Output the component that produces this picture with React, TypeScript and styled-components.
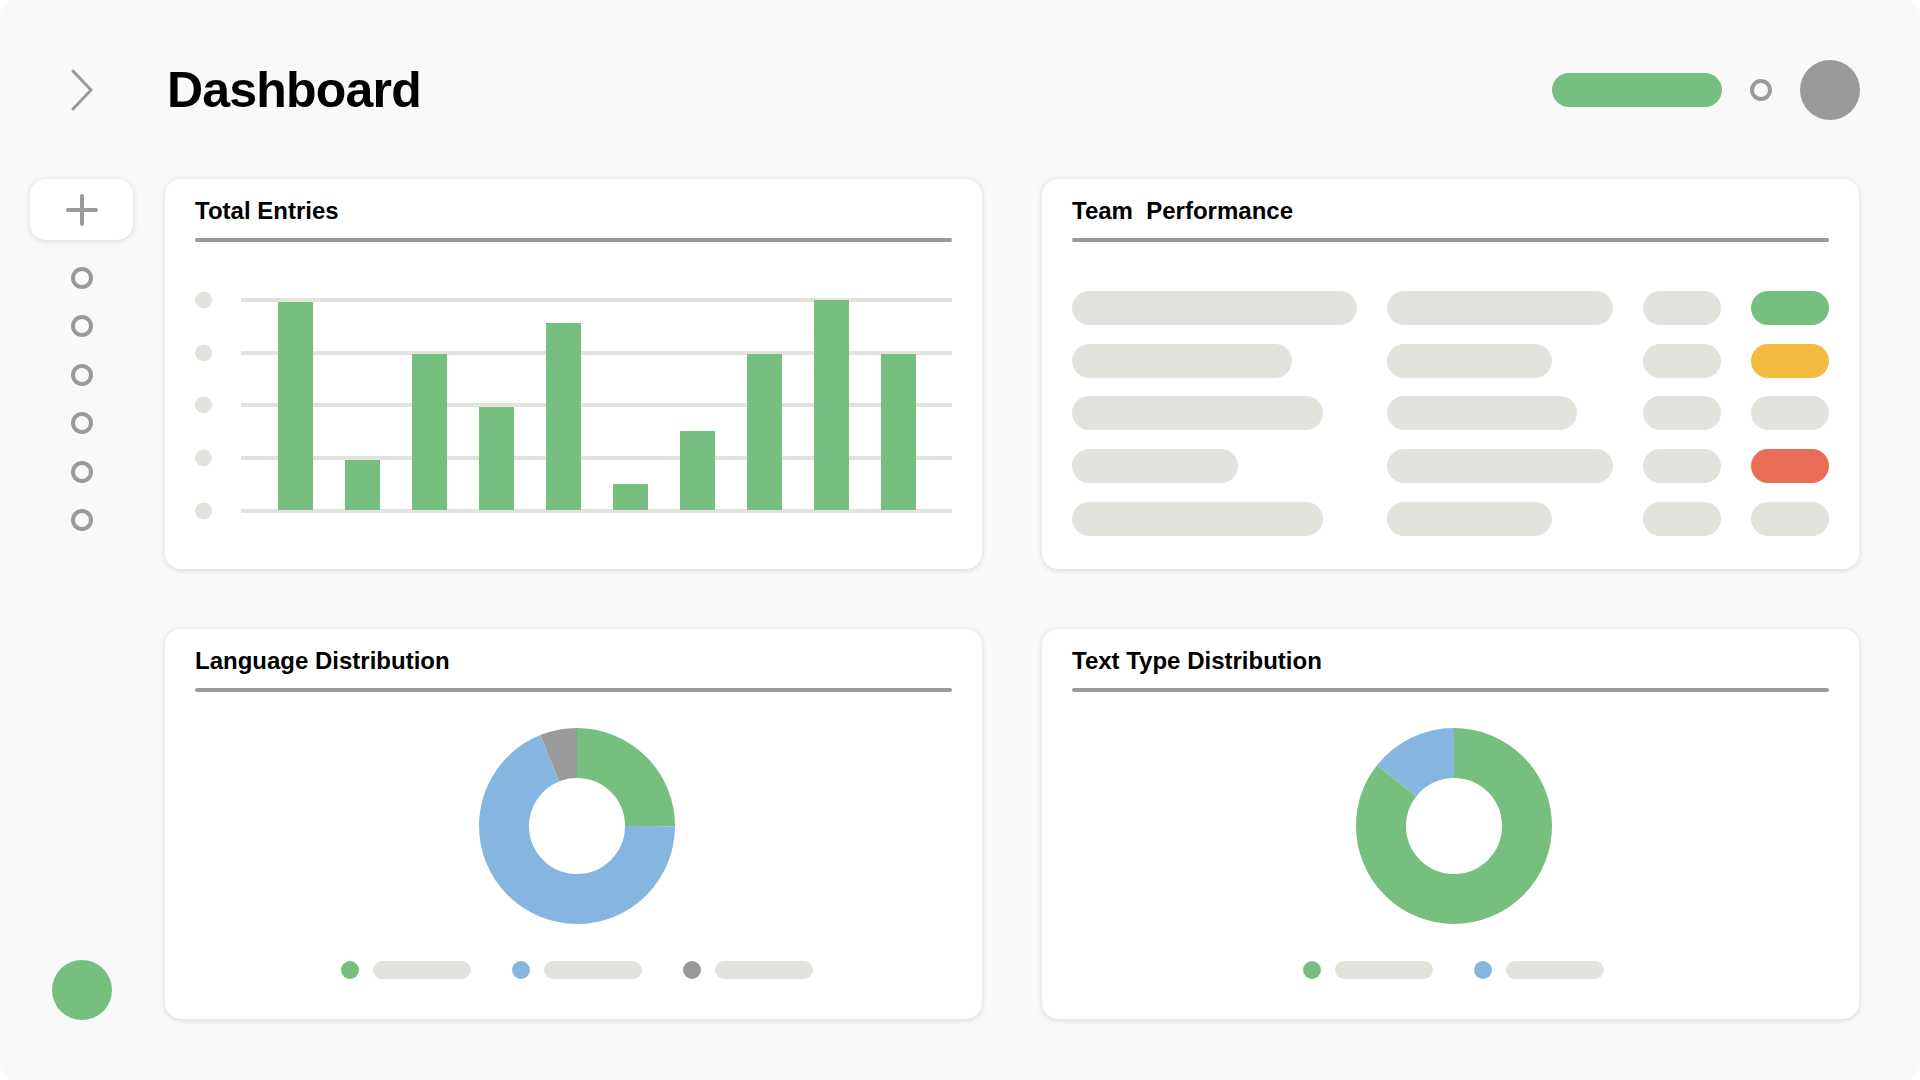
import React from 'react';
import styled, { createGlobalStyle } from 'styled-components';

const colors = {
  page: '#f9f9f9',
  green: '#77bf7f',
  blue: '#86b6df',
  gray: '#9a9a9a',
  yellow: '#f3bb40',
  red: '#e96d57',
  skeleton: '#e3e3dd',
};

type Tone = 'green' | 'yellow' | 'red' | 'gray';

const toneColor: Record<Tone, string> = {
  green: colors.green,
  yellow: colors.yellow,
  red: colors.red,
  gray: colors.skeleton,
};

const GlobalStyle = createGlobalStyle`
  html, body {
    margin: 0;
    padding: 0;
    background: #ffffff;
  }

  body {
    font-family: "Liberation Sans", Arial, sans-serif;
    color: #000;
  }

  * {
    box-sizing: border-box;
  }
`;

const Page = styled.div`
  width: 1920px;
  height: 1080px;
  background: ${colors.page};
  border-radius: 16px;
  overflow: hidden;
  display: grid;
  grid-template-columns: 165px 1fr;
  grid-template-rows: 179px 1fr;
`;

const SideCell = styled.div`
  display: flex;
  align-items: center;
  justify-content: center;
  padding: 0 32px 0 30px;
`;

const Header = styled.header`
  display: flex;
  align-items: center;
  padding-right: 60px;
`;

const Title = styled.h1`
  margin: 0 0 0 2px;
  font-size: 50px;
  line-height: 50px;
  font-weight: 700;
  letter-spacing: -0.8px;
`;

const Actions = styled.div`
  margin-left: auto;
  display: flex;
  align-items: center;
  gap: 28px;
`;

const ActionPill = styled.div`
  width: 170px;
  height: 34px;
  border-radius: 17px;
  background: ${colors.green};
`;

const Ring = styled.div`
  width: 22px;
  height: 22px;
  border-radius: 50%;
  border: 4px solid ${colors.gray};
`;

const Avatar = styled.div`
  width: 60px;
  height: 60px;
  border-radius: 50%;
  background: ${colors.gray};
`;

const Sidebar = styled.nav`
  display: flex;
  flex-direction: column;
  align-items: center;
  padding: 0 32px 60px 30px;
`;

const AddButton = styled.button`
  width: 103px;
  height: 61px;
  border: none;
  border-radius: 16px;
  background: #fff;
  box-shadow: 0 1px 6px rgba(0, 0, 0, 0.14);
  display: flex;
  align-items: center;
  justify-content: center;
  padding: 0;
  cursor: pointer;
`;

const NavList = styled.div`
  margin-top: 27px;
  display: flex;
  flex-direction: column;
  gap: 26.4px;
`;

const StatusDot = styled.div`
  margin-top: auto;
  width: 60px;
  height: 60px;
  border-radius: 50%;
  background: ${colors.green};
`;

const Cards = styled.main`
  display: grid;
  grid-template-columns: 1fr 1fr;
  grid-template-rows: 390px 390px;
  gap: 60px;
  padding-right: 61px;
  align-content: start;
`;

const Card = styled.section`
  background: #fff;
  border-radius: 16px;
  box-shadow: 0 1px 6px rgba(0, 0, 0, 0.14);
  padding: 18px 30px 0;
  display: flex;
  flex-direction: column;
`;

const CardTitle = styled.h2`
  margin: 0;
  font-size: 24px;
  line-height: 28px;
  font-weight: 700;
  white-space: pre;
`;

const Divider = styled.div`
  margin-top: 13px;
  height: 4px;
  border-radius: 2px;
  background: ${colors.gray};
`;

const ChartSvg = styled.svg`
  display: block;
  margin-top: 48px;
`;

const PerfGrid = styled.div`
  margin-top: 49px;
  display: grid;
  grid-template-columns: 285px 226px 78px 78px;
  column-gap: 30px;
  row-gap: 18.67px;
`;

const Pill = styled.div<{ $w?: number; $tone?: Tone }>`
  width: ${(p) => (p.$w ? `${p.$w}px` : '100%')};
  height: 34px;
  border-radius: 17px;
  background: ${(p) => toneColor[p.$tone || 'gray']};
`;

const PieBody = styled.div`
  margin-top: 36px;
  padding-left: 6px;
  display: flex;
  flex-direction: column;
  align-items: center;
`;

const Legend = styled.div`
  margin-top: 37px;
  display: flex;
  gap: 41px;
`;

const LegendItem = styled.div`
  display: flex;
  align-items: center;
  gap: 14px;
`;

const LegendDot = styled.div<{ $color: string }>`
  width: 18px;
  height: 18px;
  border-radius: 50%;
  background: ${(p) => p.$color};
`;

const LegendLabel = styled.div`
  width: 98px;
  height: 18px;
  border-radius: 9px;
  background: ${colors.skeleton};
`;

const Chevron = () => (
  <svg width="24" height="42" viewBox="0 0 24 42">
    <polyline
      points="3,2 21,21 3,40"
      fill="none"
      stroke={colors.gray}
      strokeWidth="3"
      strokeLinecap="round"
      strokeLinejoin="round"
    />
  </svg>
);

const PlusIcon = () => (
  <svg width="32" height="32" viewBox="0 0 32 32">
    <path
      d="M16 2 V30 M2 16 H30"
      stroke={colors.gray}
      strokeWidth="4"
      strokeLinecap="round"
    />
  </svg>
);

// bar chart: tops measured from the chart baseline
const gridLines = [10, 63, 115, 168, 221];
const bars = [12, 170, 64, 117, 33, 194, 141, 64, 10, 64];

const BarChart = () => (
  <ChartSvg width="757" height="231" viewBox="0 0 757 231">
    {gridLines.map((y) => (
      <g key={y}>
        <circle cx="8.5" cy={y} r="8.5" fill={colors.skeleton} />
        <line x1="46" x2="757" y1={y} y2={y} stroke={colors.skeleton} strokeWidth="4" />
      </g>
    ))}
    {bars.map((top, i) => (
      <rect key={i} x={83 + i * 67} y={top} width="35" height={220 - top} fill={colors.green} />
    ))}
  </ChartSvg>
);

interface Slice {
  value: number;
  color: string;
}

const Donut: React.FC<{ slices: Slice[] }> = ({ slices }) => {
  const r = 73;
  const c = 2 * Math.PI * r;
  let start = 0;

  return (
    <svg width="196" height="196" viewBox="0 0 196 196">
      <g transform="rotate(-90 98 98)">
        {slices.map((s, i) => {
          const len = s.value * c;
          const el = (
            <circle
              key={i}
              cx="98"
              cy="98"
              r={r}
              fill="none"
              stroke={s.color}
              strokeWidth="50"
              strokeDasharray={`${len} ${c - len}`}
              strokeDashoffset={-start}
            />
          );
          start += len;
          return el;
        })}
      </g>
    </svg>
  );
};

const perfRows: [number, number, Tone][] = [
  [285, 226, 'green'],
  [220, 165, 'yellow'],
  [251, 190, 'gray'],
  [166, 226, 'red'],
  [251, 165, 'gray'],
];

const languageSlices: Slice[] = [
  { value: 0.25, color: colors.green },
  { value: 0.6875, color: colors.blue },
  { value: 0.0625, color: colors.gray },
];

const textTypeSlices: Slice[] = [
  { value: 0.855, color: colors.green },
  { value: 0.145, color: colors.blue },
];

const PieCard: React.FC<{ title: string; slices: Slice[] }> = ({ title, slices }) => (
  <Card>
    <CardTitle>{title}</CardTitle>
    <Divider />
    <PieBody>
      <Donut slices={slices} />
      <Legend>
        {slices.map((s) => (
          <LegendItem key={s.color}>
            <LegendDot $color={s.color} />
            <LegendLabel />
          </LegendItem>
        ))}
      </Legend>
    </PieBody>
  </Card>
);

const App: React.FC = () => (
  <>
    <GlobalStyle />
    <Page>
      <SideCell>
        <Chevron />
      </SideCell>

      <Header>
        <Title>Dashboard</Title>
        <Actions>
          <ActionPill />
          <Ring />
          <Avatar />
        </Actions>
      </Header>

      <Sidebar>
        <AddButton aria-label="Add">
          <PlusIcon />
        </AddButton>
        <NavList>
          {[0, 1, 2, 3, 4, 5].map((i) => (
            <Ring key={i} />
          ))}
        </NavList>
        <StatusDot />
      </Sidebar>

      <Cards>
        <Card>
          <CardTitle>Total Entries</CardTitle>
          <Divider />
          <BarChart />
        </Card>

        <Card>
          <CardTitle>{'Team  Performance'}</CardTitle>
          <Divider />
          <PerfGrid>
            {perfRows.map(([a, b, tone], i) => (
              <React.Fragment key={i}>
                <Pill $w={a} />
                <Pill $w={b} />
                <Pill />
                <Pill $tone={tone} />
              </React.Fragment>
            ))}
          </PerfGrid>
        </Card>

        <PieCard title="Language Distribution" slices={languageSlices} />
        <PieCard title="Text Type Distribution" slices={textTypeSlices} />
      </Cards>
    </Page>
  </>
);

export default App;
